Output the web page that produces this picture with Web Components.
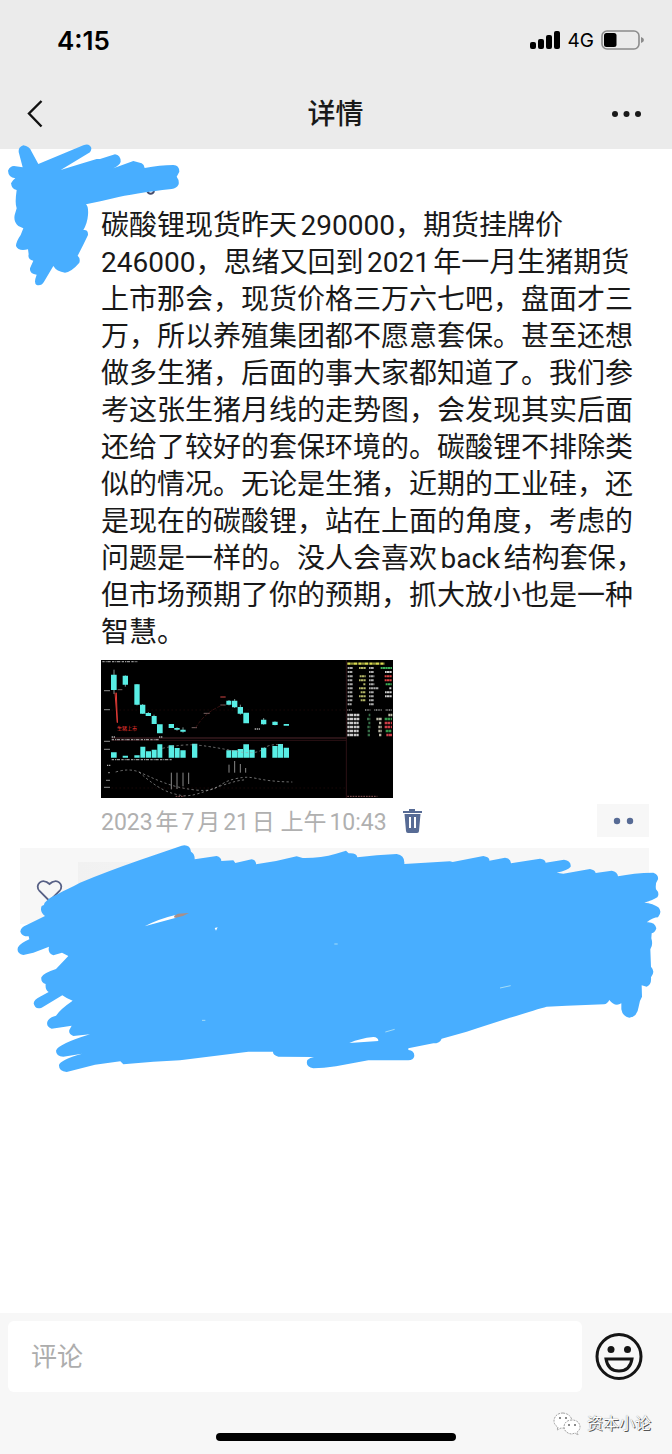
<!DOCTYPE html>
<html lang="zh-CN">
<head>
<meta charset="utf-8">
<meta name="viewport" content="width=device-width, initial-scale=1">
<title>详情</title>
<style>
html,body{margin:0;background:#fff}
body{font-family:Roboto,"Noto Sans CJK SC",sans-serif;color:#191919}
</style>
</head>
<body>
<moment-page></moment-page>
<script>
const define=(name,html)=>{
  const template=document.createElement('template');
  template.innerHTML=html;
  customElements.define(name,class extends HTMLElement{
    constructor(){
      super();
      this.attachShadow({mode:'open'}).appendChild(template.content.cloneNode(true));
    }
  });
};

define('status-bar',`
<style>
:host{display:flex;align-items:center;justify-content:space-between;height:80px;padding:0 28px 0 57px;box-sizing:border-box;color:#000;font-family:Inter,sans-serif}
time{font-size:26px;font-weight:600}
.right{display:flex;align-items:center;gap:7px;font-size:19px}
svg{display:block}
</style>
<time>4:15</time>
<div class="right">
  <svg width="31" height="20" viewBox="0 0 31 20"><rect x="0" y="12" width="6" height="7" rx="2"/><rect x="8" y="9" width="6" height="10" rx="2"/><rect x="16" y="5" width="6" height="14" rx="2"/><rect x="24" y="1" width="6" height="18" rx="2"/></svg>
  <span>4G</span>
  <svg width="43" height="20" viewBox="0 0 43 20"><rect x="1" y="1" width="37" height="18" rx="5" fill="none" stroke="#8c8c8c" stroke-width="1.6"/><rect x="3" y="3" width="12.500" height="14" rx="2.500"/><path d="M40 7q3 .8 3 3t-3 3z" fill="#8c8c8c"/></svg>
</div>`);

define('nav-bar',`
<style>
:host{display:grid;grid-template-columns:1fr auto 1fr;align-items:center;height:69px;padding:0 30px 2px 27px;box-sizing:border-box}
h1{margin:0;padding:2px 0 0 2px;font-size:28px;line-height:40px;font-weight:500}
button{border:0;background:none;padding:0;color:inherit}
.more{justify-self:end}
svg{display:block}
</style>
<button aria-label="返回"><svg width="16" height="28" viewBox="0 0 16 28" fill="none" stroke="#111" stroke-width="2.400"><path d="M14.500 1 2 13.500 14.500 26.500"/></svg></button>
<h1><slot></slot></h1>
<button class="more" aria-label="更多"><svg width="34" height="8" viewBox="0 0 34 8" fill="#191919"><circle cx="7" cy="4" r="3"/><circle cx="18.500" cy="4" r="3"/><circle cx="30" cy="4" r="3"/></svg></button>`);

define('name-cover',`
<style>
:host{display:block;position:absolute;left:0;top:-9px;width:200px;height:150px}
svg{display:block;width:100%;height:100%}
</style>
<svg viewBox="0 0 600 450" aria-hidden="true">
<path d="M442 153q2 8 10 8q8 0 10-8M395 157v5" fill="none" stroke="#444c6c" stroke-width="6"/>
<path fill="#48aeff" d="M57 40Q52 22 70 16Q88 18 95 35L115 72L250 16Q268 8 274 24Q274 36 265 40L182 90Q230 75 290 57L300 57L345 43Q362 45 362 65Q360 75 340 85L400 63L425 70Q434 75 434 84Q480 75 520 75Q538 76 538 95L530 110Q538 120 536 133Q530 146 515 147Q400 160 340 175Q300 185 258 193Q266 200 264 225Q262 250 250 270Q265 268 264 285Q250 315 233 347Q242 355 238 368Q215 395 195 398Q170 395 160 378L132 425Q125 438 110 435Q100 430 110 404Q88 402 90 385L100 362Q82 358 86 343L84 328Q55 335 48 318Q48 305 62 285L70 265L55 258Q40 245 44 225L50 205Q44 190 50 150Q35 148 33 130Q38 120 46 115Q25 112 24 92Q30 78 42 78L68 82Z"/>
</svg>`);

define('price-chart',`
<style>
:host{display:block;width:292px;height:138px}
svg{display:block;width:100%;height:100%;background:#000}
</style>
<svg viewBox="16 16 876 414" role="img" aria-label="生猪月线走势图">
<g fill="none" stroke="#3a1212" stroke-width="2">
<path d="M48 166H752M48 400H752" stroke-dasharray="3 9"/><path d="M48 250H752" stroke="#7a3a42"/><path d="M752 16V430M48 257H752" stroke="#431a20"/></g>
<g stroke="#b8d8d4" stroke-width="2"><path d="M55 45V118M89 62V96M124 88V152M141 148V178M158 172V184M175 180V208M244 218V228M262 218V234M400 136V152M417 133V160M434 150V180M504 190V210M538 200V212"/><path d="M66 105H80M288 219H304M374 151H390M324 176H342" stroke="#b09090"/></g>
<g fill="#58eee5">
<path d="M46 60h17v46h-17zM81 63h16v27h-16zM116 89h16v61h-16zM133 150h16v27h-16zM150 175h16v9h-16zM168 184h15v24h-15zM184 209h17v27h-17zM219 208h16v12h-16zM236 220h16v5h-16zM254 225h16v6h-16zM392 138h15v12h-15zM409 138h16v20h-16zM426 157h16v20h-16zM443 174h17v32h-17zM496 195h16v14h-16zM530 201h16v10h-16zM564 208h16v5h-16z"/>
<path d="M46 293h17v16h-17zM81 303h16v6h-16zM116 302h16v7h-16zM134 276h15v33h-15zM151 290h15v19h-15zM168 285h15v24h-15zM185 269h15v40h-15zM219 272h16v37h-16zM237 280h15v29h-15zM254 287h16v22h-16zM289 267h16v42h-16zM392 287h15v22h-15zM409 287h16v22h-16zM426 283h16v26h-16zM443 269h17v40h-17zM461 285h16v24h-16zM496 279h16v30h-16zM530 274h16v35h-16zM547 268h15v41h-15zM564 279h16v30h-16z"/></g>
<path d="M58 114 65 204 62 114" fill="none" stroke="#e33b36" stroke-width="3"/>
<text x="64" y="226" font-size="15" fill="#ff3b36" font-family="Noto Sans CJK SC, sans-serif">生猪上市</text>
<path d="M374 127h16" stroke="#d24545" stroke-width="3"/>
<path d="M20 21H125M48 255H190M48 315H228" stroke="#c8c8c8" stroke-width="4" stroke-dasharray="7 3 3 2 10 4" opacity=".75"/>
<path d="M26 108H44M26 165H44M26 260H44M26 284H44M34 332H44M38 354H44M32 377H44M26 398H44M48 247h12M190 247h12M477 223h18" stroke="#aaa" stroke-width="4" stroke-dasharray="4 2"/>
<g fill="none" stroke="#a5a5a5" stroke-width="2" stroke-dasharray="7 7"><path d="M60 352Q100 340 130 352C185 376 225 398 300 406S360 385 420 372S470 380 590 382"/><path d="M130 352C190 406 220 415 255 422S330 408 380 392S430 378 450 375"/><path d="M200 281Q260 268 300 271T410 288T500 284T560 271"/></g>
<path d="M300 219Q330 170 382 151" fill="none" stroke="#521818" stroke-width="2" stroke-dasharray="10 5"/>
<path d="M227 354V404M244 354V403M262 354V395M279 354V388M400 330V354M417 319V354M434 328V354M450 340V354" stroke="#888" stroke-width="3"/>
<path d="M240 425h26M755 425H845" stroke="#8c5656" stroke-width="3" stroke-dasharray="5 3"/>
<path d="M755 27H867" stroke="#d9da51" stroke-width="7" stroke-dasharray="10 2 4 2 12 3"/>
<g stroke-width="6" stroke-dasharray="5 1 8 1"><path d="M756 40h16M756 52h14M756 65h16M756 77h14M756 89h16M756 101h16M756 113h15M756 125h16M756 137h15M756 149h12M820 40h15M820 52h14M820 65h16M820 77h14M820 89h16M820 101h28M820 113h15M820 125h15M820 137h15M820 149h14" stroke="#aaa"/><path d="M790 40h20M792 65h18M790 77h20M803 89h7M790 101h20M795 113h15M790 125h20M795 137h15" stroke="#b2b567"/><path d="M855 40h34M870 89h18" stroke="#3daf58"/><path d="M867 65h22M867 77h22" stroke="#d84444"/><path d="M868 52h20M881 101h7M868 113h20M868 125h20" stroke="#ccc"/></g>
<path d="M755 166h14M808 166h16M836 166h22M870 166h18" stroke="#999" stroke-width="5" stroke-dasharray="3 2"/>
<g stroke-width="8" stroke-dasharray="7 1 9 2"><path d="M755 181h36M755 193h38M755 205h34M755 217h38M755 229h34M755 241h34" stroke="#ccc"/><path d="M819 181h5M814 193h10M818 205h6M815 217h9M816 229h8M816 241h8" stroke="#376e48"/><path d="M842 193h16M850 205h8M848 217h10M848 229h10M850 241h8M878 181h12" stroke="#bbb9a6"/><path d="M867 193h22M870 229h18" stroke="#34984b"/><path d="M867 205h22M867 217h22M872 241h17" stroke="#cc3e48"/></g>
</svg>`);

define('comment-panel',`
<style>
:host{display:block;position:relative;margin-top:11px}
.panel{display:flex;align-items:flex-start;box-sizing:border-box;height:76px;margin:0 23px 0 20px;background:#f7f7f7;padding:14px 0 0 16px;gap:15px}
.heart{display:block;margin-top:17px}
.likes{flex:1;height:62px;background:linear-gradient(90deg,#f1f1f1,#f7f7f7 40%)}
.cover{display:block;position:absolute;left:0;top:-8px;width:672px;height:240px}
</style>
<div class="panel">
<svg class="heart" width="27" height="25" viewBox="0 0 27 25" fill="none" stroke="#576085" stroke-width="1.800"><path d="M13.500 22 3.500 12C-2 6 6-2 13.500 5C21-2 29 6 23.500 12Z"/></svg>
<div class="likes"></div>
</div>
<svg class="cover" viewBox="0 0 2016 720" aria-hidden="true">
<path fill="#48aeff" d="M140 182C150 170 190 155 240 128Q320 95 420 60L545 17Q570 12 573 35Q585 42 584 58L650 48Q664 52 664 63L700 61L706 69L755 58Q770 62 768 73Q830 65 890 49L908 54Q960 55 1008 41L1038 32L1046 40Q1070 38 1072 52Q1130 44 1190 42Q1215 45 1213 72L1350 64L1358 66L1450 48Q1470 52 1468 62L1515 53Q1532 55 1533 70L1620 56Q1636 58 1637 68L1692 59Q1714 62 1712 80Q1704 90 1670 98L1690 101L1770 87Q1786 90 1787 99L1835 92Q1853 96 1854 109Q1900 99 1960 98Q1976 104 1974 118Q1965 130 1968 148Q1980 160 1972 172Q1960 180 1933 188Q1960 190 1975 202Q1988 215 1974 232Q1960 232 1940 247Q1965 245 1969 265Q1965 278 1955 280L1954 295Q1960 315 1951 328L1953 380Q1967 395 1953 412Q1955 435 1940 440L1925 436L1926 470Q1918 482 1916 500Q1912 530 1888 533Q1868 530 1864 508L1864 490Q1845 502 1828 480Q1822 492 1812 493L1700 497L1640 500Q1600 510 1400 575L1325 596Q1320 610 1300 610L1225 625L1225 630Q1243 632 1243 648Q1240 661 1225 661L1105 661L1008 679Q970 685 940 685Q915 680 922 660Q930 652 942 651L835 650Q818 645 819 635L745 635L540 661L460 665L370 673L361 664L285 674L200 696Q176 694 177 675Q180 660 246 641L190 650Q168 648 168 632Q175 612 270 583L220 588Q205 582 208 570L215 557L155 566Q138 560 142 545Q146 533 168 527Q180 508 218 482Q200 476 187 466L125 503Q105 510 101 490Q102 478 120 470L146 456Q135 450 137 432Q122 428 124 412Q128 400 168 387L205 348L186 338L160 346Q142 340 147 320L100 338L70 345Q48 340 54 322Q60 310 88 298L86 289Q66 290 61 275Q62 262 80 255L135 228Q118 215 125 198Q134 195 134 188Z"/>
<path fill="#fff" d="M434 259Q475 237 526 225L528 233ZM644 264l9-2-5 10zM1048 609Q1080 595 1120 591Q1135 592 1135 603Z"/>
<path fill="#a98f88" d="M522 228l12-7 33-2-18 9-25 6z"/>
<path d="M606 541h10M1003 312h10M1500 444l32-7M1156 576l28-8" stroke="#a4dcf7" stroke-width="3"/>
</svg>`);

define('moment-post',`
<style>
:host{display:block;position:relative;padding-top:58px}
.content{padding:0 23px 0 101px}
p{margin:0 4px 0 0;font-size:28px;line-height:37px;text-autospace:normal}
price-chart{margin-top:9px}
.meta{display:flex;align-items:center;height:33px;margin-top:6px;color:#b0b0b0;font-size:23px}
time{text-autospace:normal;padding-bottom:2px}
button{border:0;padding:0;background:none}
.delete{margin-left:16px}
.action{display:flex;align-items:center;justify-content:center;width:52px;height:33px;margin-left:auto;background:#f7f7f7}
svg{display:block}
</style>
<div class="content">
<p><slot></slot></p>
<price-chart></price-chart>
<div class="meta"><time datetime="2023-07-21T10:43">2023年7月21日 上午10:43</time>
<button class="delete" aria-label="删除"><svg width="19" height="24" viewBox="0 0 19 24"><path fill="#576b95" d="M6 0h6v2h7v2H0V2h6zM1.500 5h16L16 22q0 2-2 2H5q-2 0-2-2z"/><path d="M7 8v11M12 8v11" stroke="#fff" stroke-width="2"/></svg></button>
<button class="action" aria-label="评论或赞"><svg width="22" height="8" viewBox="0 0 22 8" fill="#576b95"><circle cx="5" cy="4" r="3.200"/><circle cx="18" cy="4" r="3.200"/></svg></button></div>
</div>
<comment-panel></comment-panel>
<name-cover></name-cover>`);

define('wechat-mark',`
<style>
:host{position:absolute;right:21px;bottom:18px;display:flex;align-items:center;gap:6px;font-size:16px;line-height:24px;color:#fff;text-shadow:1px 1px 0 #555,0 0 1px #777}
svg{display:block}
</style>
<svg width="28" height="24" viewBox="0 0 28 24" fill="#fff" stroke="#8a8a8a" stroke-width=".8" stroke-dasharray="2 1"><path d="M10 1C4 1 1 5 1 9q0 4 4 6l-1 3 4-2q9 1 11-7Q18 2 10 1z"/><path d="M19 8c-5 0-8 3-8 7s4 7 8 7l3-1 3 2-1-3q3-2 3-5c0-4-3-7-8-7z"/><path d="M6 6h2M12 6h2M15 13h2M21 13h2" stroke="#666" stroke-width="1.500"/></svg>
<span><slot></slot></span>`);

define('reply-bar',`
<style>
:host{display:block;position:relative;background:#f7f7f7;padding:8px 29px 13px 8px}
form{display:flex;align-items:center;gap:13px;margin:0}
input{flex:1;min-width:0;height:71px;box-sizing:border-box;border:0;border-radius:6px;background:#fff;padding:0 23px;font:26px Roboto,"Noto Sans CJK SC",sans-serif;color:#191919;outline:0}
input::placeholder{color:#adadad;opacity:1}
button{border:0;padding:0;background:none}
svg{display:block}
.home{width:240px;height:8px;border-radius:4px;background:#000;margin:41px auto 0}
.home-row{margin-right:-21px}
</style>
<form><input type="text" placeholder="评论" aria-label="评论">
<button type="button" aria-label="表情"><svg width="48" height="48" viewBox="0 0 48 48" fill="none" stroke="#151515" stroke-width="3"><circle cx="24" cy="23.500" r="22"/><circle cx="16" cy="16.500" r="3.500" fill="#151515" stroke="none"/><circle cx="32.500" cy="16.500" r="3.500" fill="#151515" stroke="none"/><path d="M11 26H37Q35 38 24 38T11 26z"/></svg></button></form>
<div class="home-row"><div class="home"></div></div>
<wechat-mark>资本小论</wechat-mark>`);

define('moment-page',`
<style>
:host{display:flex;flex-direction:column;min-height:100vh;overflow-x:hidden}
header{background:#ebebeb}
main{flex:1}
</style>
<header><status-bar></status-bar><nav-bar>详情</nav-bar></header>
<main><moment-post>碳酸锂现货昨天290000，期货挂牌价246000，思绪又回到2021年一月生猪期货上市那会，现货价格三万六七吧，盘面才三万，所以养殖集团都不愿意套保。甚至还想做多生猪，后面的事大家都知道了。我们参考这张生猪月线的走势图，会发现其实后面还给了较好的套保环境的。碳酸锂不排除类似的情况。无论是生猪，近期的工业硅，还是现在的碳酸锂，站在上面的角度，考虑的问题是一样的。没人会喜欢back结构套保，但市场预期了你的预期，抓大放小也是一种智慧。</moment-post></main>
<reply-bar></reply-bar>`);
</script>
</body>
</html>
